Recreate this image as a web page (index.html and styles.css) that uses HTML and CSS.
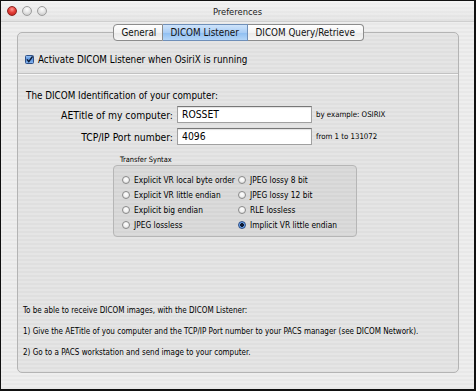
FILE: index.html
```html
<!DOCTYPE html>
<html>
<head>
<meta charset="utf-8">
<title>Preferences</title>
<link rel="stylesheet" href="styles.css">
</head>
<body>
<div class="window">
  <div class="titlebar">
    <div class="lights">
      <span class="light red"></span>
      <span class="light gray"></span>
      <span class="light gray"></span>
    </div>
    <div class="title">Preferences</div>
  </div>
  <div class="content">
    <div class="tabbox">
      <div class="tabs">
        <div class="tab">General</div>
        <div class="tab selected">DICOM Listener</div>
        <div class="tab">DICOM Query/Retrieve</div>
      </div>
      <div class="check-row">
        <svg class="checkbox" width="9" height="9" viewBox="0 0 9 9">
          <defs>
            <linearGradient id="cb" x1="0" y1="0" x2="0" y2="1">
              <stop offset="0" stop-color="#9cc4f2"/>
              <stop offset="0.5" stop-color="#5c95e0"/>
              <stop offset="1" stop-color="#8ab8ef"/>
            </linearGradient>
          </defs>
          <rect x="0.5" y="0.5" width="8" height="8" rx="1" fill="url(#cb)" stroke="#2f4f86"/>
          <path d="M2 4.4 L3.8 6.6 L7.6 1.4" fill="none" stroke="#0d1a33" stroke-width="1.5"/>
        </svg>
        <span>Activate DICOM Listener when OsiriX is running</span>
      </div>
      <div class="separator"></div>
      <div class="ident-title">The DICOM Identification of your computer:</div>
      <div class="form">
        <div class="form-row">
          <label class="form-label">AETitle of my computer:</label>
          <div class="input">ROSSET</div>
          <span class="hint">by example: OSIRIX</span>
        </div>
        <div class="form-row">
          <label class="form-label">TCP/IP Port number:</label>
          <div class="input">4096</div>
          <span class="hint">from 1 to 131072</span>
        </div>
      </div>
      <div class="syntax">
        <div class="group-label">Transfer Syntax</div>
        <div class="group">
          <div class="radio-row"><span class="radio"></span><span>Explicit VR local byte order</span></div>
          <div class="radio-row"><span class="radio"></span><span>JPEG lossy 8 bit</span></div>
          <div class="radio-row"><span class="radio"></span><span>Explicit VR little endian</span></div>
          <div class="radio-row"><span class="radio"></span><span>JPEG lossy 12 bit</span></div>
          <div class="radio-row"><span class="radio"></span><span>Explicit big endian</span></div>
          <div class="radio-row"><span class="radio"></span><span>RLE lossless</span></div>
          <div class="radio-row"><span class="radio"></span><span>JPEG lossless</span></div>
          <div class="radio-row"><span class="radio on"></span><span>Implicit VR little endian</span></div>
        </div>
      </div>
      <div class="notes">
        <p>To be able to receive DICOM images, with the DICOM Listener:</p>
        <p>1) Give the AETitle of you computer and the TCP/IP Port number to your PACS manager (see DICOM Network).</p>
        <p>2) Go to a PACS workstation and send image to your computer.</p>
      </div>
    </div>
  </div>
</div>
</body>
</html>
```
FILE: styles.css
```css
* { box-sizing: border-box; }
html, body { margin: 0; padding: 0; background: #fff; }
body {
  font-family: "DejaVu Sans Condensed", "DejaVu Sans", sans-serif;
  font-stretch: condensed;
  color: #000;
  font-size: 9.8px;
}
.window {
  width: 476px;
  height: 391px;
  border: 1px solid #111;
  border-right-width: 2px;
  border-bottom-width: 2px;
  display: flex;
  flex-direction: column;
  background: repeating-linear-gradient(to bottom, #eeeeee 0, #eeeeee 2px, #e8e8e8 2px, #e8e8e8 4px);
}
.titlebar {
  height: 21px;
  display: flex;
  align-items: center;
  position: relative;
  background: linear-gradient(to bottom, rgba(255,255,255,0.35), rgba(0,0,0,0.03));
  border-bottom: 1px solid #cfcfcf;
}
.lights {
  display: flex;
  gap: 5px;
  margin-left: 6px;
}
.light {
  width: 10px;
  height: 10px;
  border-radius: 50%;
  display: block;
}
.light.red {
  background: radial-gradient(circle at 50% 30%, #ff9a94 0, #e5403a 45%, #b91d18 100%);
  border: 1px solid #8e2420;
}
.light.gray {
  background: radial-gradient(circle at 50% 30%, #ffffff 0, #e2e2e2 50%, #c4c4c4 100%);
  border: 1px solid #9d9d9d;
}
.title {
  position: absolute;
  left: 0;
  right: 0;
  top: 0;
  bottom: 0;
  display: flex;
  align-items: center;
  justify-content: center;
  font-size: 9.3px;
  color: #1a1a1a;
  pointer-events: none;
}
.content {
  flex: 1;
  display: flex;
  flex-direction: column;
  padding: 10px 15px 16px 16px;
}
.tabbox {
  flex: 1;
  border: 1px solid #b4b4b4;
  border-radius: 5px;
  background: rgba(0,0,0,0.035);
  display: flex;
  flex-direction: column;
}
.tabs {
  display: flex;
  justify-content: center;
  margin-top: -9px;
  height: 17px;
}
.tab {
  height: 17px;
  line-height: 15px;
  padding: 0 0 0 8px;
  border: 1px solid #8c8c8c;
  border-left: none;
  background: linear-gradient(to bottom, #ffffff 0, #f4f4f4 50%, #e9e9e9 51%, #f6f6f6 100%);
  font-size: 9.8px;
  color: #111;
}
.tab:first-child {
  border-left: 1px solid #8c8c8c;
  border-radius: 4px 0 0 4px;
  width: 50px;
}
.tab:nth-child(2) { width: 85px; }
.tab:last-child {
  border-radius: 0 4px 4px 0;
  width: 116px;
}
.tab.selected {
  background: linear-gradient(to bottom, #cfe4fb 0, #a9cdf5 50%, #8dbdf1 51%, #b4d6f8 100%);
  border-color: #6f8fb8;
}
.check-row {
  display: flex;
  align-items: center;
  gap: 4px;
  height: 12px;
  margin-top: 12px;
  padding-left: 7px;
}
.checkbox { display: block; flex: none; }
.separator {
  margin-top: 8px;
  height: 2px;
  border-top: 1px solid #c2c2c2;
  border-bottom: 1px solid #f8f8f8;
}
.ident-title {
  margin-top: 15px;
  height: 12px;
  line-height: 12px;
  padding-left: 8px;
}
.form {
  margin-top: 4px;
  display: flex;
  flex-direction: column;
  gap: 5px;
}
.form-row {
  display: flex;
  align-items: center;
  height: 17px;
}
.form-label {
  width: 155px;
  text-align: right;
  font-size: 10.3px;
}
.input {
  margin-left: 4px;
  width: 135px;
  height: 17px;
  background: #fff;
  border: 1px solid #a0a0a0;
  border-top-color: #777;
  box-shadow: inset 0 1px 1px rgba(0,0,0,0.12);
  font-size: 10.3px;
  line-height: 15px;
  padding-left: 4px;
}
.hint {
  margin-left: 4px;
  font-size: 7.8px;
}
.syntax {
  margin-top: 10px;
  margin-left: 95px;
  width: 244px;
}
.group-label {
  font-size: 7.4px;
  height: 9px;
  line-height: 9px;
  padding-left: 7px;
  margin-bottom: 1px;
}
.group {
  height: 72px;
  border: 1px solid #b6b6b6;
  border-radius: 4px;
  background: rgba(0,0,0,0.045);
  display: grid;
  grid-template-columns: 116px 1fr;
  grid-auto-rows: 14.8px;
  padding: 7px 0 0 8px;
  font-size: 8.3px;
}
.radio-row {
  display: flex;
  align-items: center;
  gap: 4px;
  white-space: nowrap;
}
.radio {
  width: 8px;
  height: 8px;
  border-radius: 50%;
  flex: none;
  border: 1px solid #8a8a8a;
  background: radial-gradient(circle at 50% 35%, #ffffff 0, #f0f0f0 50%, #cfcfcf 100%);
}
.radio.on {
  border-color: #2f4f86;
  background: radial-gradient(circle at 50% 50%, #0d1a33 0, #0d1a33 1.6px, #6ea5ea 2.2px, #4b86d8 100%);
}
.notes {
  margin-top: 69px;
  padding-left: 5px;
  font-size: 8px;
}
.notes p {
  margin: 0 0 11px 0;
  height: 10px;
  line-height: 10px;
  white-space: nowrap;
}
```
